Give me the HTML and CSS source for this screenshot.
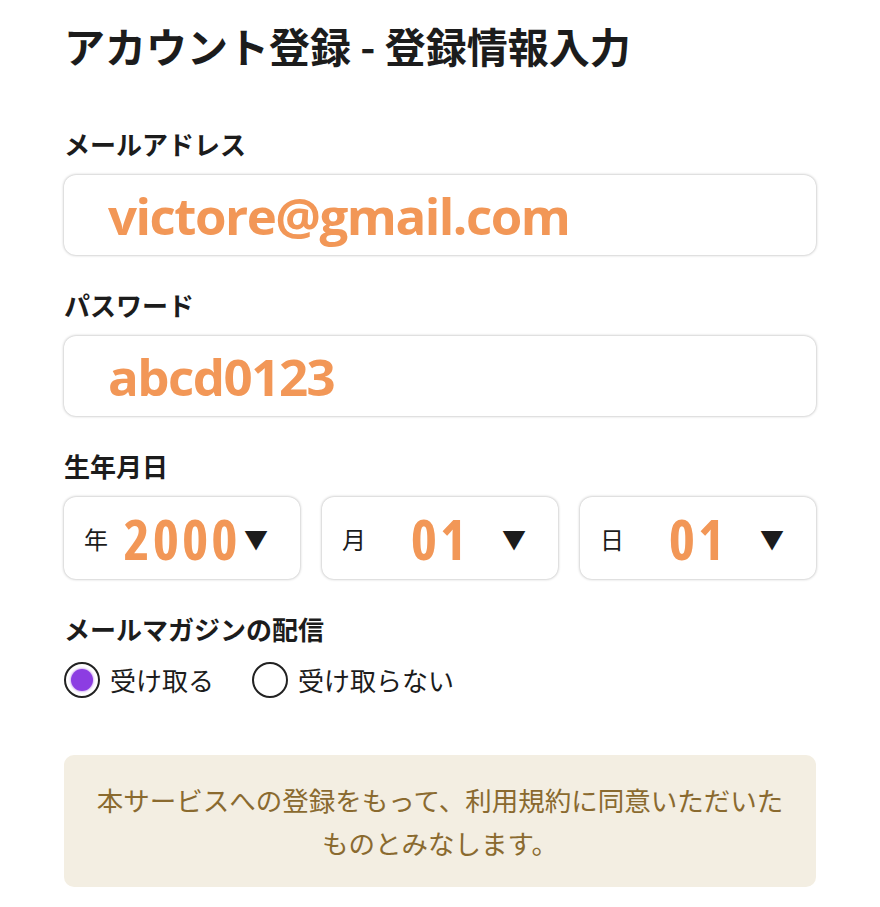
FILE: index.html
```html
<!DOCTYPE html>
<html lang="ja">
<head>
    <meta charset="UTF-8">
    <meta name="viewport" content="width=device-width, initial-scale=1.0">
    <title>アカウント登録 - 登録情報入力</title>
    <link rel="stylesheet" href="styles.css">
</head>
<body>
    <div class="container">
        <h1>アカウント登録 - 登録情報入力</h1>

        <div class="field">
            <div class="label">メールアドレス</div>
            <div class="input-box">victore@gmail.com</div>
        </div>

        <div class="field">
            <div class="label">パスワード</div>
            <div class="input-box">abcd0123</div>
        </div>

        <div class="field">
            <div class="label">生年月日</div>
            <div class="date-row">
                <div class="select-box">
                    <span class="unit">年</span>
                    <span class="value">2000</span>
                    <span class="arrow">▼</span>
                </div>
                <div class="select-box">
                    <span class="unit">月</span>
                    <span class="value">01</span>
                    <span class="arrow">▼</span>
                </div>
                <div class="select-box">
                    <span class="unit">日</span>
                    <span class="value">01</span>
                    <span class="arrow">▼</span>
                </div>
            </div>
        </div>

        <div class="field">
            <div class="label">メールマガジンの配信</div>
            <div class="radio-row">
                <label class="radio">
                    <span class="dot checked"></span>
                    受け取る
                </label>
                <label class="radio">
                    <span class="dot"></span>
                    受け取らない
                </label>
            </div>
        </div>

        <div class="notice">
            本サービスへの登録をもって、利用規約に同意いただいた<br>ものとみなします。
        </div>
    </div>
</body>
</html>
```

FILE: styles.css
```css
body {
    margin: 0;
    background-color: #fff;
    color: #1c1c1c;
    font-family: "Noto Sans CJK JP", "Noto Sans", sans-serif;
}
.container {
    width: 752px;
    margin-left: 64px;
    padding-top: 20px;
}
h1 {
    margin: 0 0 58px;
    font-size: 41px;
    line-height: 50px;
    font-weight: 700;
}
.field {
    margin-bottom: 34px;
}
.label {
    font-size: 26px;
    line-height: 32px;
    font-weight: 700;
    margin-bottom: 15px;
}
.input-box {
    height: 80px;
    box-sizing: border-box;
    padding-left: 44px;
    display: flex;
    align-items: center;
    border-radius: 12px;
    box-shadow: 0 0 3px rgba(0, 0, 0, 0.35);
    color: #f29757;
    font-family: "Open Sans", sans-serif;
    font-stretch: 90%;
    font-weight: 700;
    font-size: 51px;
    letter-spacing: -1.5px;
}
.date-row {
    display: grid;
    grid-template-columns: repeat(3, 1fr);
    gap: 22px;
}
.select-box {
    height: 82px;
    box-sizing: border-box;
    padding: 0 20px;
    display: grid;
    grid-template-columns: 1fr auto 1fr;
    align-items: center;
    border-radius: 12px;
    box-shadow: 0 0 3px rgba(0, 0, 0, 0.35);
}
.unit {
    font-size: 24px;
    justify-self: start;
}
.value {
    color: #f29757;
    font-family: "Open Sans", sans-serif;
    font-stretch: 75%;
    font-weight: 700;
    font-size: 56px;
    letter-spacing: 3px;
}
.arrow {
    justify-self: end;
    margin-right: 12px;
    font-size: 24px;
}
.radio-row {
    display: flex;
    gap: 38px;
    margin-top: 4px;
}
.radio {
    display: flex;
    align-items: center;
    gap: 10px;
    font-size: 26px;
    line-height: 40px;
}
.dot {
    width: 32px;
    height: 32px;
    border: 2px solid #222;
    border-radius: 50%;
    box-sizing: content-box;
    display: inline-block;
    position: relative;
}
.dot.checked::after {
    content: "";
    position: absolute;
    left: 5px;
    top: 5px;
    width: 22px;
    height: 22px;
    border-radius: 50%;
    background-color: #8c3de2;
    box-shadow: 0 0 2px 1px #d7b8f5;
}
.notice {
    margin-top: 55px;
    padding: 23px 0;
    background-color: #f3eee2;
    border-radius: 10px;
    color: #8a6a2f;
    font-size: 26.5px;
    line-height: 43px;
    text-align: center;
}
```
